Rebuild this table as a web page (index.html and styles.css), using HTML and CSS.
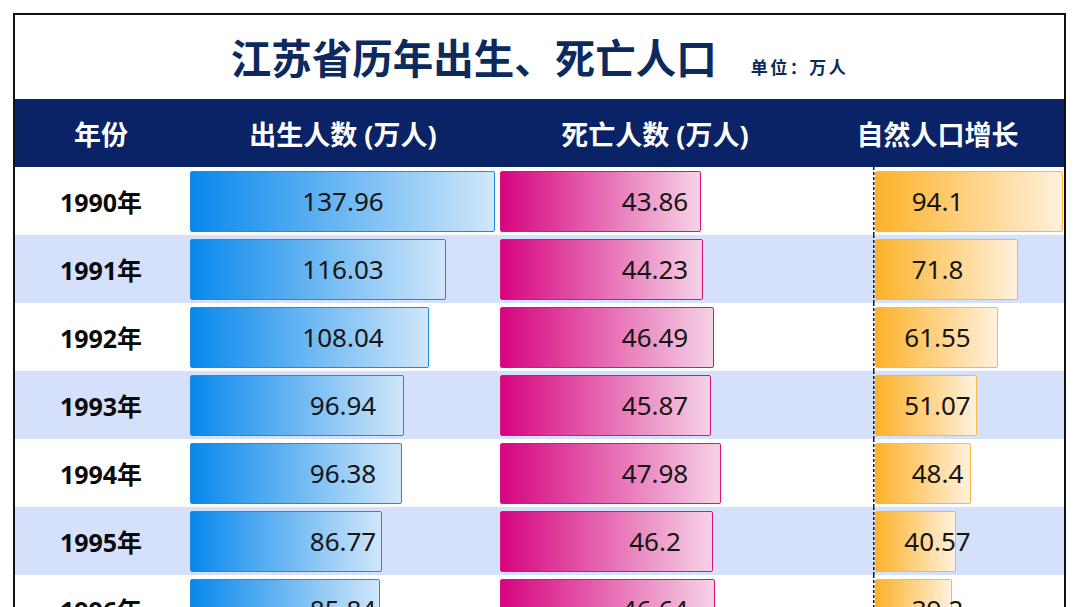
FILE: index.html
```html
<!DOCTYPE html>
<html lang="zh-CN">
<head>
<meta charset="utf-8">
<title>江苏省历年出生、死亡人口</title>
<link rel="stylesheet" href="styles.css">
</head>
<body>
<div class="board">
  <header class="title-bar">
    <h1 class="title">江苏省历年出生、死亡人口</h1>
    <span class="unit">单位：万人</span>
  </header>
  <div class="thead">
    <div class="th">年份</div>
    <div class="th">出生人数 (万人)</div>
    <div class="th">死亡人数 (万人)</div>
    <div class="th">自然人口增长</div>
  </div>
  <div class="tbody">
    <div class="row">
      <div class="year">1990年</div>
      <div class="cell birth"><div class="bar" style="width:305px"></div><span class="val">137.96</span></div>
      <div class="cell death"><div class="bar" style="width:201px"></div><span class="val">43.86</span></div>
      <div class="cell growth"><div class="track"><div class="bar" style="width:188px"></div></div><span class="val">94.1</span></div>
    </div>
    <div class="row">
      <div class="year">1991年</div>
      <div class="cell birth"><div class="bar" style="width:256px"></div><span class="val">116.03</span></div>
      <div class="cell death"><div class="bar" style="width:203px"></div><span class="val">44.23</span></div>
      <div class="cell growth"><div class="track"><div class="bar" style="width:143px"></div></div><span class="val">71.8</span></div>
    </div>
    <div class="row">
      <div class="year">1992年</div>
      <div class="cell birth"><div class="bar" style="width:239px"></div><span class="val">108.04</span></div>
      <div class="cell death"><div class="bar" style="width:214px"></div><span class="val">46.49</span></div>
      <div class="cell growth"><div class="track"><div class="bar" style="width:123px"></div></div><span class="val">61.55</span></div>
    </div>
    <div class="row">
      <div class="year">1993年</div>
      <div class="cell birth"><div class="bar" style="width:214px"></div><span class="val">96.94</span></div>
      <div class="cell death"><div class="bar" style="width:211px"></div><span class="val">45.87</span></div>
      <div class="cell growth"><div class="track"><div class="bar" style="width:102px"></div></div><span class="val">51.07</span></div>
    </div>
    <div class="row">
      <div class="year">1994年</div>
      <div class="cell birth"><div class="bar" style="width:212px"></div><span class="val">96.38</span></div>
      <div class="cell death"><div class="bar" style="width:221px"></div><span class="val">47.98</span></div>
      <div class="cell growth"><div class="track"><div class="bar" style="width:96px"></div></div><span class="val">48.4</span></div>
    </div>
    <div class="row">
      <div class="year">1995年</div>
      <div class="cell birth"><div class="bar" style="width:192px"></div><span class="val">86.77</span></div>
      <div class="cell death"><div class="bar" style="width:213px"></div><span class="val">46.2</span></div>
      <div class="cell growth"><div class="track"><div class="bar" style="width:81px"></div></div><span class="val">40.57</span></div>
    </div>
    <div class="row">
      <div class="year">1996年</div>
      <div class="cell birth"><div class="bar" style="width:190px"></div><span class="val">85.84</span></div>
      <div class="cell death"><div class="bar" style="width:215px"></div><span class="val">46.64</span></div>
      <div class="cell growth"><div class="track"><div class="bar" style="width:77px"></div></div><span class="val">39.2</span></div>
    </div>
  </div>
</div>
</body>
</html>
```

FILE: styles.css
```css
html, body {
  margin: 0;
  padding: 0;
  overflow: hidden;
  background: #ffffff;
}

body {
  font-family: "Noto Sans", "Noto Sans CJK SC", sans-serif;
  color: #111;
}

.board {
  margin: 13px 0 0 13px;
  width: 1049px;
  border: 2px solid #111;
  background: #fff;
}

.title-bar {
  height: 84px;
  display: flex;
  justify-content: center;
  align-items: baseline;
  gap: 34px;
  padding-top: 17px;
  box-sizing: border-box;
}

.title {
  margin: 0;
  font-family: "Noto Sans CJK SC", sans-serif;
  font-size: 40.5px;
  font-weight: 700;
  line-height: 50px;
  color: #0c2a5e;
}

.unit {
  font-family: "Noto Sans CJK SC", sans-serif;
  font-size: 17px;
  font-weight: 700;
  letter-spacing: 2.5px;
  color: #0c2a5e;
}

.thead,
.row {
  display: grid;
  grid-template-columns: 172px 312px 312px 253px;
  height: 68px;
}

.thead {
  background: #0a2366;
}

.th {
  display: flex;
  align-items: center;
  justify-content: center;
  color: #fff;
  font-family: "Noto Sans", "Noto Sans CJK SC", sans-serif;
  font-size: 27px;
  font-weight: 700;
}

.row:nth-child(even) {
  background: #d5e1fb;
}

.year {
  display: flex;
  align-items: center;
  justify-content: center;
  font-family: "Noto Sans", "Noto Sans CJK SC", sans-serif;
  font-size: 25px;
  font-weight: 700;
  color: #0a0a0a;
}

.cell {
  display: grid;
  align-items: center;
}

.cell > * {
  grid-area: 1 / 1;
}

.bar {
  height: 61px;
  box-sizing: border-box;
  border-radius: 2px;
  border: 1.5px solid;
  justify-self: start;
}

.val {
  justify-self: center;
  font-size: 26px;
  line-height: 1;
  color: #151515;
}

.birth .bar {
  margin-left: 3px;
  border-color: #1a8ce8;
  background: linear-gradient(to right, #0888ec, #d0e7f9);
}

.death .bar {
  margin-left: 1px;
  border-color: #d8147f;
  background: linear-gradient(to right, #d6047f, #f6d2e6);
}

.growth .track {
  margin-left: 62px;
  height: 68px;
  padding-left: 1.5px;
  display: flex;
  align-items: center;
  background: repeating-linear-gradient(to bottom, #1a1a1a 0 3px, transparent 3px 5px) left top / 1.5px 100% no-repeat;
}

.growth .bar {
  border-color: #f8b845;
  background: linear-gradient(to right, #fdb22a, #fff1dc);
}
```
